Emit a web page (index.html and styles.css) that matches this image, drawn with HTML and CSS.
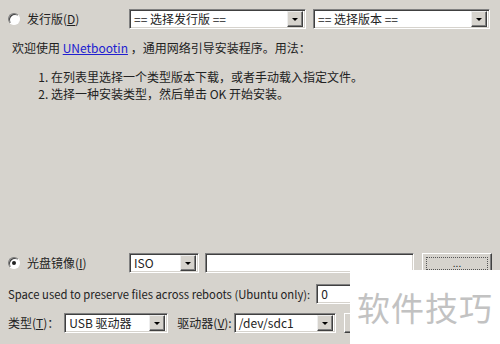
FILE: index.html
```html
<!DOCTYPE html>
<html lang="zh-CN">
<head>
    <meta charset="UTF-8">
    <title>UNetbootin</title>
    <link rel="stylesheet" href="styles.css">
</head>
<body>
    <div class="janela">
        <div class="linha linha-distro">
            <label class="opcao">
                <span class="radio"></span>
                <span>发行版(<u>D</u>)</span>
            </label>
            <div class="combo combo-distro">
                <span class="combo-texto">== 选择发行版 ==</span>
                <span class="seta"></span>
            </div>
            <div class="combo combo-versao">
                <span class="combo-texto">== 选择版本 ==</span>
                <span class="seta"></span>
            </div>
        </div>

        <p class="intro">欢迎使用 <a href="#">UNetbootin</a> ，通用网络引导安装程序。用法：</p>
        <ol class="passos">
            <li>在列表里选择一个类型版本下载，或者手动载入指定文件。</li>
            <li>选择一种安装类型，然后单击 OK 开始安装。</li>
        </ol>

        <div class="linha linha-iso">
            <label class="opcao">
                <span class="radio marcado"></span>
                <span>光盘镜像(<u>I</u>)</span>
            </label>
            <div class="combo combo-iso">
                <span class="combo-texto">ISO</span>
                <span class="seta"></span>
            </div>
            <div class="campo campo-arquivo"></div>
            <div class="botao botao-procurar"><span class="foco">...</span></div>
        </div>

        <div class="linha linha-espaco">
            <span class="texto-espaco">Space used to preserve files across reboots (Ubuntu only):</span>
            <div class="campo campo-espaco">0</div>
        </div>

        <div class="linha linha-tipo">
            <span>类型(<u>T</u>)：</span>
            <div class="combo combo-tipo">
                <span class="combo-texto">USB 驱动器</span>
                <span class="seta"></span>
            </div>
            <span class="rotulo-drive">驱动器(<u>V</u>):</span>
            <div class="combo combo-drive">
                <span class="combo-texto">/dev/sdc1</span>
                <span class="seta"></span>
            </div>
            <div class="botao botao-extra"></div>
        </div>

        <div class="marca">软件技巧</div>
    </div>
</body>
</html>
```

FILE: styles.css
```css
body { margin: 0; background-color: #d6d3cd; color: #222; font-family: "Noto Sans CJK SC", "DejaVu Sans", sans-serif; font-size: 12px; line-height: 16px; }
.janela { position: relative; width: 500px; height: 344px; overflow: hidden; }
.linha { display: flex; align-items: center; height: 20px; padding-left: 8px; }
.linha-distro { margin-top: 9px; }
.opcao { display: flex; align-items: center; gap: 7px; width: 121px; }
.radio { width: 10px; height: 10px; border-radius: 50%; background: #fff; border: 1px solid; border-color: #7a7a7a #fff #fff #7a7a7a; box-shadow: inset 1px 1px 0 #404040; position: relative; }
.radio.marcado::after { content: ""; position: absolute; left: 3px; top: 3px; width: 4px; height: 4px; border-radius: 50%; background: #222; }
.combo, .campo { box-sizing: border-box; height: 20px; background: #fff; border: 1px solid; border-color: #808080 #fff #fff #808080; box-shadow: inset 1px 1px 0 #404040, inset -1px -1px 0 #d6d3cd; display: flex; align-items: center; flex-shrink: 0; }
.combo-texto { flex: 1; padding-left: 4px; white-space: nowrap; overflow: hidden; }
.seta { width: 16px; height: 16px; margin-right: 2px; box-sizing: border-box; background: #d6d3cd; border: 1px solid; border-color: #eee #404040 #404040 #eee; box-shadow: inset -1px -1px 0 #808080; position: relative; }
.seta::after { content: ""; position: absolute; left: 4px; top: 6px; border-left: 3px solid transparent; border-right: 3px solid transparent; border-top: 3px solid #000; }
.combo-distro { width: 177px; }
.combo-versao { width: 177px; margin-left: 7px; }
.intro { margin: 11px 0 0 12px; }
.intro a { color: #2020d0; }
.passos { margin: 12px 0 0 0; padding-left: 51px; }
.passos li { line-height: 17px; height: 17px; }
.linha-iso { margin-top: 151px; }
.combo-iso { width: 70px; }
.campo-arquivo { width: 209px; margin-left: 6px; }
.botao { box-sizing: border-box; background: #d6d3cd; border: 1px solid; border-color: #fff #404040 #404040 #fff; box-shadow: inset -1px -1px 0 #808080; flex-shrink: 0; }
.botao-procurar { width: 70px; height: 21px; margin-left: 8px; padding: 3px; }
.foco { display: flex; justify-content: center; align-items: flex-end; height: 100%; box-sizing: border-box; border: 1px dotted #555; font-size: 10px; line-height: 10px; padding-bottom: 1px; }
.linha-espaco { margin-top: 11px; }
.texto-espaco { font-size: 11.25px; }
.campo-espaco { width: 60px; margin-left: 6px; padding-left: 4px; }
.linha-tipo { margin-top: 9px; }
.combo-tipo { width: 104px; margin-left: 5px; }
.rotulo-drive { margin-left: 9px; }
.combo-drive { width: 102px; margin-left: 2px; }
.botao-extra { width: 40px; height: 20px; margin-left: 8px; }
.marca { position: absolute; left: 350px; top: 270px; width: 150px; height: 74px; background: #fff; color: #c2c2c2; font-family: "Noto Sans CJK SC", sans-serif; font-size: 33px; line-height: 74px; text-indent: 7px; letter-spacing: 1px; }
```
